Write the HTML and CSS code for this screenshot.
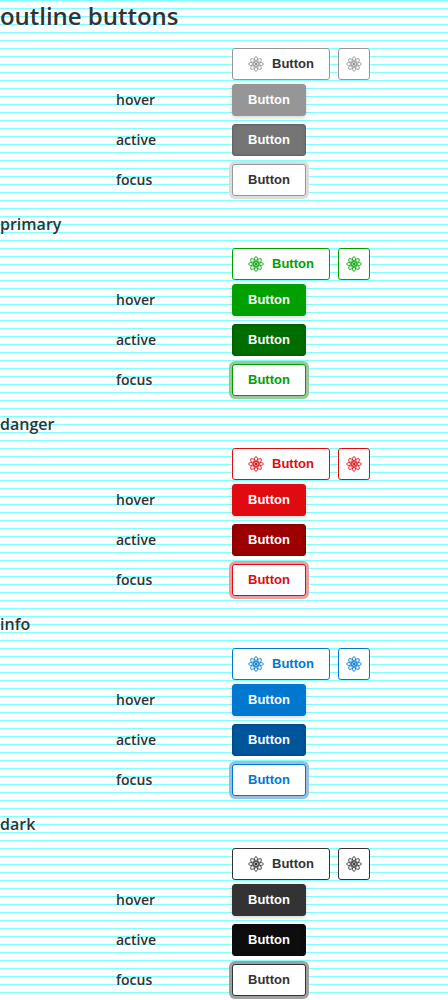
FILE: index.html
```html
<!DOCTYPE html>
<html lang="en">
<head>
<meta charset="utf-8">
<title>Outline buttons</title>
<link rel="stylesheet" href="styles.css">
</head>
<body>
<svg width="0" height="0" class="sprite" aria-hidden="true">
  <symbol id="atom" viewBox="0 0 16 16">
    <g fill="none" stroke="currentColor" stroke-width=".85">
      <ellipse cx="8" cy="8" rx="7.5" ry="2.1"/>
      <ellipse cx="8" cy="8" rx="7.5" ry="2.1" transform="rotate(90 8 8)"/>
      <ellipse cx="8" cy="8" rx="7.2" ry="2.5" transform="rotate(45 8 8)"/>
      <ellipse cx="8" cy="8" rx="7.2" ry="2.5" transform="rotate(135 8 8)"/>
    </g>
    <circle cx="8" cy="8" r="1.2" fill="currentColor"/>
  </symbol>
</svg>
<main id="demo"></main>
<script src="script.js"></script>
</body>
</html>
```
FILE: styles.css
```css
* { box-sizing: border-box; }
body {
  margin: 0;
  height: 1000px;
  overflow: hidden;
  color: #333;
  font-family: "Open Sans", sans-serif;
  font-weight: 600;
  background: #fff linear-gradient(#80ffff 1px, transparent 1px) 0 0 / 100% 8px;
}
.sprite { display: block; }
.group { height: 200px; }
.title { margin: 0; height: 40px; padding-top: 12px; font-size: 16px; line-height: 24px; font-weight: 600; }
.title-main { padding-top: 0; font-size: 24px; line-height: 32px; letter-spacing: -.03px; }
.row { display: grid; grid-template-columns: 116px 1fr; height: 40px; align-items: center; padding-left: 116px; font-size: 14px; line-height: 24px; }
.row-default { padding-top: 8px; }
.row-default .buttons { height: 32px; }
.buttons { display: flex; gap: 8px; }
.btn {
  display: flex;
  align-items: center;
  gap: 8px;
  height: 32px;
  padding: 0 15px;
  border: 1px solid var(--line);
  border-radius: 3px;
  background: #fff;
  color: var(--text);
  font: bold 13px/16px "Liberation Sans", Arial, sans-serif;
}
.btn-icon { width: 32px; padding: 0 7px; }
.icon { width: 16px; height: 16px; flex: none; color: var(--line); }
.is-hover { background: var(--line); color: #fff; box-shadow: 0 1px 4px rgba(0,0,0,.2); }
.is-active { background: var(--active); border-color: var(--edge); color: #fff; box-shadow: inset 0 0 3px rgba(0,0,0,.15); }
.is-focus { box-shadow: 0 0 0 3px var(--ring); }
.default { --line: #969696; --text: #333; --active: #757575; --edge: #656565; --ring: #ddd; }
.primary { --line: #00a000; --text: #00a000; --active: #006d00; --edge: #006000; --ring: #99c999; }
.danger { --line: #e00b10; --text: #e00b10; --active: #9c0000; --edge: #8a0000; --ring: #e8a0a0; }
.info { --line: #0078d0; --text: #0078d0; --active: #00559b; --edge: #004b89; --ring: #99c0e2; }
.dark { --line: #333; --text: #333; --active: #0d0d0d; --edge: #0b0b0b; --ring: #a0a0a0; }
```
FILE: script.js
```js
const icon = '<svg class="icon"><use href="#atom"/></svg>';
const groups = [['default', 'outline buttons'], ['primary', 'primary'], ['danger', 'danger'], ['info', 'info'], ['dark', 'dark']];
document.getElementById('demo').innerHTML = groups.map(([name, title], i) => `
  <section class="group ${name}">
    <h2 class="title ${i ? '' : 'title-main'}">${title}</h2>
    <div class="row row-default"><span></span><div class="buttons">
      <button class="btn">${icon}Button</button><button class="btn btn-icon" aria-label="Button">${icon}</button>
    </div></div>
    ${['hover', 'active', 'focus'].map(s => `<div class="row"><span>${s}</span><div class="buttons"><button class="btn is-${s}">Button</button></div></div>`).join('')}
  </section>`).join('');
```
